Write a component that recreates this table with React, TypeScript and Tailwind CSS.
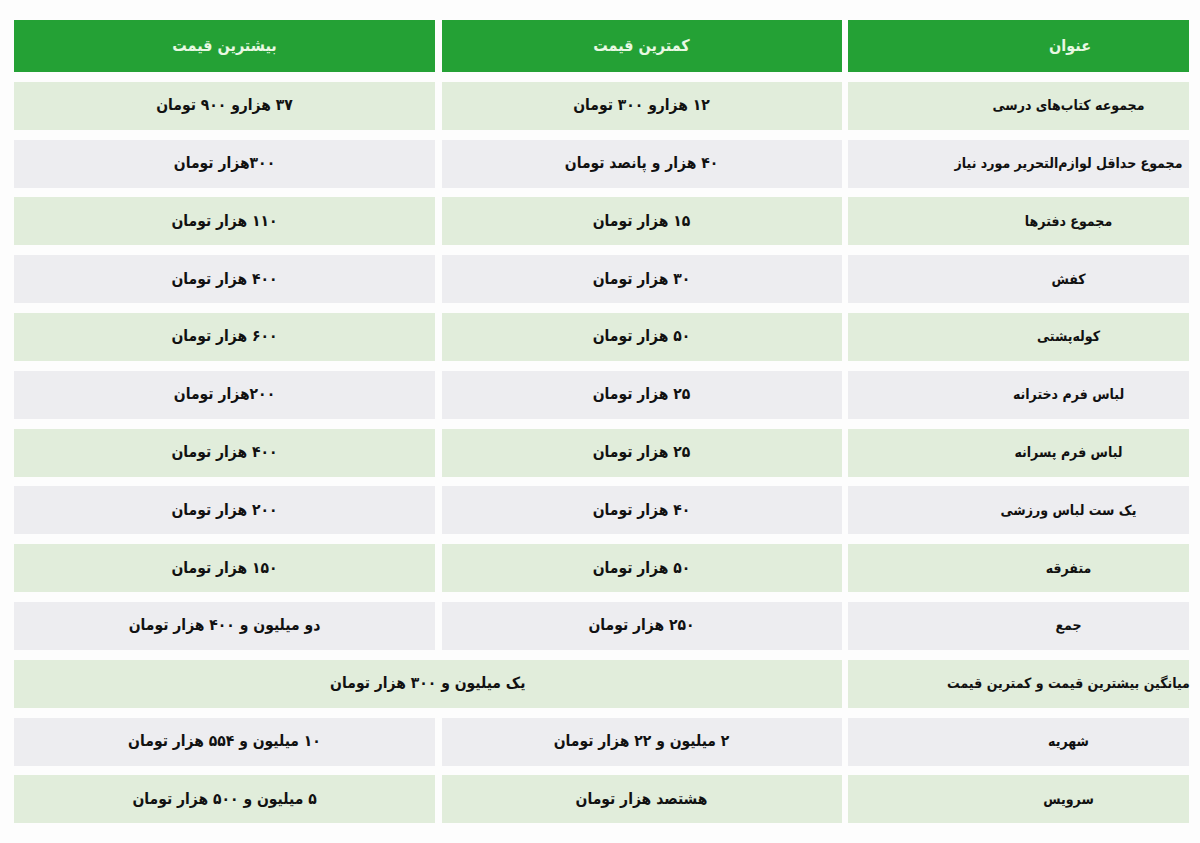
import React from "react";

type Row = { t: string; min: string; max?: string; merged?: string };

const rows: Row[] = [
  { t: "مجموعه کتاب‌های درسی", min: "۱۲ هزارو ۳۰۰ تومان", max: "۳۷ هزارو ۹۰۰ تومان" },
  { t: "مجموع حداقل لوازم‌التحریر مورد نیاز", min: "۴۰ هزار و پانصد تومان", max: "۳۰۰هزار تومان" },
  { t: "مجموع دفترها", min: "۱۵ هزار تومان", max: "۱۱۰ هزار تومان" },
  { t: "کفش", min: "۳۰ هزار تومان", max: "۴۰۰ هزار تومان" },
  { t: "کوله‌پشتی", min: "۵۰ هزار تومان", max: "۶۰۰ هزار تومان" },
  { t: "لباس فرم دخترانه", min: "۲۵ هزار تومان", max: "۲۰۰هزار تومان" },
  { t: "لباس فرم پسرانه", min: "۲۵ هزار تومان", max: "۴۰۰ هزار تومان" },
  { t: "یک ست لباس ورزشی", min: "۴۰ هزار تومان", max: "۲۰۰ هزار تومان" },
  { t: "متفرقه", min: "۵۰ هزار تومان", max: "۱۵۰ هزار تومان" },
  { t: "جمع", min: "۲۵۰ هزار تومان", max: "دو میلیون و ۴۰۰ هزار تومان" },
  { t: "میانگین بیشترین قیمت و کمترین قیمت", min: "", merged: "یک میلیون و ۳۰۰ هزار تومان" },
  { t: "شهریه", min: "۲ میلیون و ۲۲ هزار تومان", max: "۱۰ میلیون و ۵۵۴ هزار تومان" },
  { t: "سرویس", min: "هشتصد هزار تومان", max: "۵ میلیون و ۵۰۰ هزار تومان" },
];

export default function App() {
  return (
    <div
      className="min-h-screen w-[1200px] bg-[#fdfdfd] pt-[20px] pl-[14px]"
      style={{ fontFamily: '"DejaVu Sans Condensed", "DejaVu Sans", sans-serif' }}
    >
      <div
        dir="rtl"
        className="grid w-[1175px] grid-cols-[341px_400px_421px] gap-x-[6.5px] gap-y-[9.8px] font-bold text-[#111]"
        style={{ fontStretch: "condensed" }}
      >
        <div className="flex h-[52px] items-center justify-center bg-[#24a135] pl-[103px] text-[16px] text-[#e8f8e2]">
          عنوان
        </div>
        <div className="flex h-[52px] items-center justify-center bg-[#24a135] text-[16px] text-[#e8f8e2]">
          کمترین قیمت
        </div>
        <div className="flex h-[52px] items-center justify-center bg-[#24a135] text-[16px] text-[#e8f8e2]">
          بیشترین قیمت
        </div>
        {rows.map((r, i) => {
          const bg = i % 2 === 0 ? "bg-[#e1eddb]" : "bg-[#ededf0]";
          return (
            <React.Fragment key={i}>
              <div className={`flex h-[48px] items-center justify-center whitespace-nowrap pl-[100px] text-[14px] ${bg}`}>
                {r.t}
              </div>
              {r.merged ? (
                <div className={`col-span-2 flex h-[48px] items-center justify-center text-[15.5px] ${bg}`}>
                  {r.merged}
                </div>
              ) : (
                <>
                  <div className={`flex h-[48px] items-center justify-center text-[15.5px] ${bg}`}>{r.min}</div>
                  <div className={`flex h-[48px] items-center justify-center text-[15.5px] ${bg}`}>{r.max}</div>
                </>
              )}
            </React.Fragment>
          );
        })}
      </div>
    </div>
  );
}
